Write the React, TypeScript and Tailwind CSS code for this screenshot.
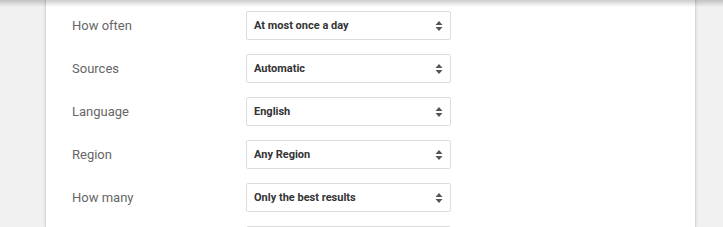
const rows = [
  { label: 'How often', value: 'At most once a day' },
  { label: 'Sources', value: 'Automatic' },
  { label: 'Language', value: 'English' },
  { label: 'Region', value: 'Any Region' },
  { label: 'How many', value: 'Only the best results' },
]

function Arrows() {
  return (
    <svg width="8" height="12" viewBox="0 0 8 12" className="text-[#555]">
      <path d="M4 1 L7.5 5 L0.5 5 Z" fill="currentColor" />
      <path d="M0.5 7 L7.5 7 L4 11 Z" fill="currentColor" />
    </svg>
  )
}

export default function App() {
  return (
    <div className="relative h-[227px] w-[723px] overflow-hidden bg-[#f1f1f1] font-['Roboto',sans-serif]">
      {/* header shadow coming from above */}
      <div className="pointer-events-none absolute inset-x-0 top-0 z-10 h-[7px] bg-gradient-to-b from-black/20 to-transparent" />

      <div className="ml-[45px] h-full w-[651px] border-x border-[#d8d8d8] bg-white pl-[26px] pt-[11px] shadow-[0_0_3px_rgba(0,0,0,0.12)]">
        {rows.map(row => (
          <div key={row.label} className="mb-[14px] flex h-[29px] items-center">
            <div className="w-[174px] text-[13px] text-[#666]">{row.label}</div>
            <div className="flex h-[29px] w-[205px] items-center justify-between rounded-[2px] border border-[#ddd] bg-white pl-[7px] pr-[7px]">
              <span className="pt-px text-[11px] font-bold text-[#333]">{row.value}</span>
              <Arrows />
            </div>
          </div>
        ))}
        {/* next row, only its select's top edge shows */}
        <div className="flex h-[29px] items-center">
          <div className="w-[174px]" />
          <div className="h-[29px] w-[205px] rounded-[2px] border border-[#ddd] bg-white" />
        </div>
      </div>
    </div>
  )
}
